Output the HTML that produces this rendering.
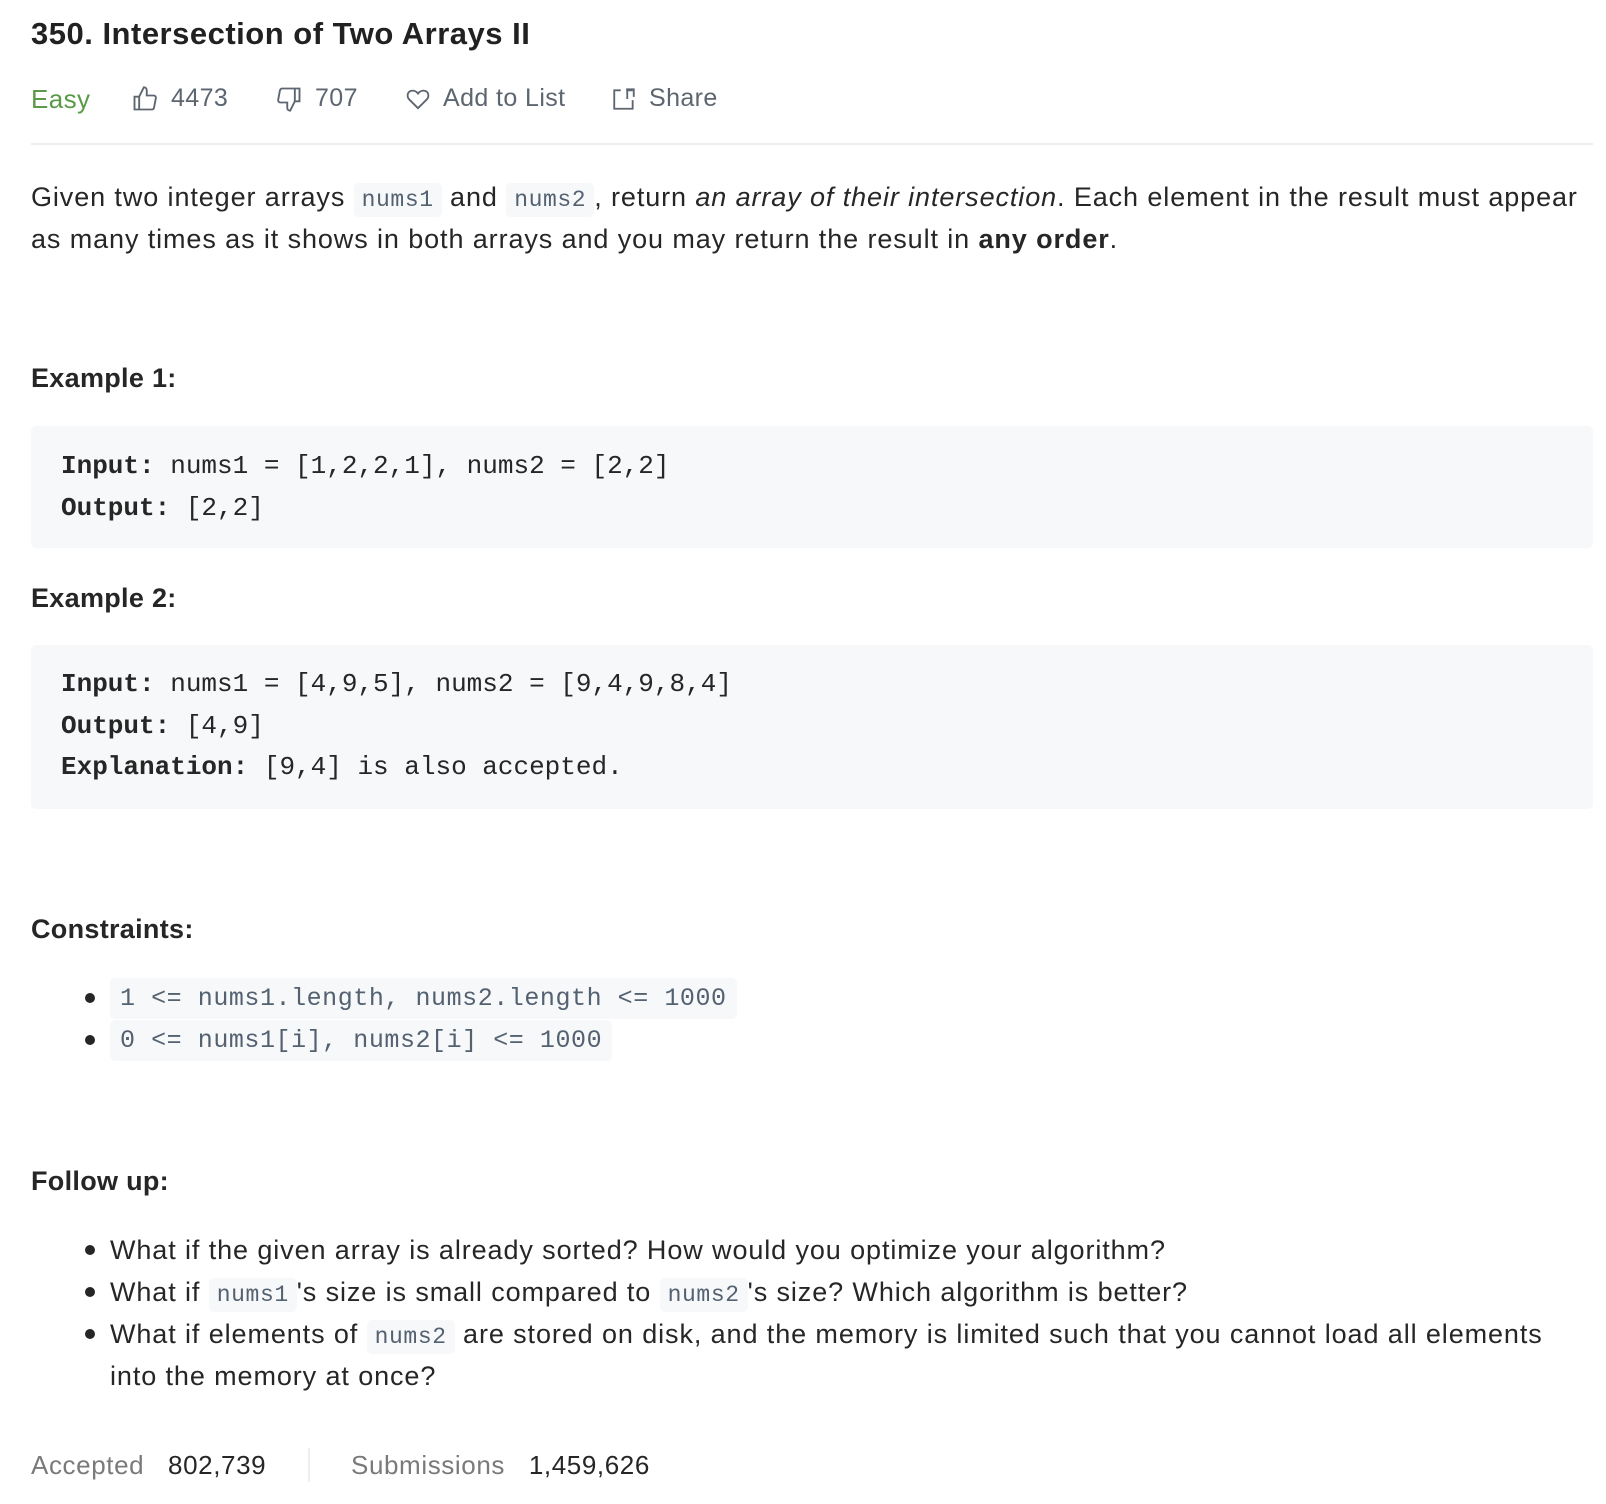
<!DOCTYPE html>
<html><head><meta charset="utf-8"><style>
body{margin:0;width:1606px;height:1504px;background:#fff;font-family:"Liberation Sans",sans-serif;color:#262626;position:relative;overflow:hidden}
.a{position:absolute;white-space:nowrap}
.t{font-size:31px;font-weight:600;color:#212121;left:31px;top:16px;letter-spacing:0.5px}
.meta{top:84px;font-size:25px;color:#5d6670;display:flex;align-items:center;letter-spacing:0.4px}
.p{font-size:27px;line-height:42px;left:31px;color:#262626;letter-spacing:0.9px}
code{font-family:"Liberation Mono",monospace;font-size:23px;background:#f7f8fa;color:#546171;padding:4px 8px;border-radius:5px;letter-spacing:0.6px}
.h{font-size:27px;font-weight:700;left:31px;color:#262626;letter-spacing:0.3px}
.pre{position:absolute;left:31px;width:1562px;background:#f7f8fa;border-radius:5px}
.pl{position:absolute;left:61px;font-family:"Liberation Mono",monospace;font-size:26px;color:#262626;white-space:pre}
.pl b{font-weight:700}
.dot{position:absolute;left:85px;width:10px;height:10px;border-radius:50%;background:#262626}
.c2{font-family:"Liberation Mono",monospace;font-size:25px;color:#546171;background:#f7f8fa;border-radius:5px;padding:6px 10px;letter-spacing:0.55px}
</style></head><body>
<div class="a t">350. Intersection of Two Arrays II</div>
<div class="a meta" style="left:31px;color:#5b9a48;font-size:26px">Easy</div>
<div class="a meta" style="left:131px">
<svg width="28" height="28" viewBox="0 0 24 24" fill="none" stroke="#5d6670" stroke-width="1.6"><path d="M7 10v11H3V10h4zm0 0l4-8c1.5 0 2.5 1 2.5 2.5V9h6c1 0 2 1 1.8 2.2l-1.5 8c-.2 1-1 1.8-2 1.8H7"/></svg><span style="margin-left:12px">4473</span></div>
<div class="a meta" style="left:275px">
<svg width="28" height="28" viewBox="0 0 24 24" fill="none" stroke="#5d6670" stroke-width="1.6"><path d="M17 14V3h4v11h-4zm0 0l-4 8c-1.5 0-2.5-1-2.5-2.5V15h-6c-1 0-2-1-1.8-2.2l1.5-8C4.4 3.8 5.2 3 6.2 3H17"/></svg><span style="margin-left:12px">707</span></div>
<div class="a meta" style="left:405px">
<svg width="26" height="26" viewBox="0 0 24 24" fill="none" stroke="#5d6670" stroke-width="1.7"><path d="M12 20.5L4 12.5C1.5 10 2 5.5 5.5 4.5 8 3.8 10.5 5 12 7c1.5-2 4-3.2 6.5-2.5 3.5 1 4 5.5 1.5 8z"/></svg><span style="margin-left:12px">Add to List</span></div>
<div class="a meta" style="left:611px">
<svg width="26" height="26" viewBox="0 0 24 24" fill="none" stroke="#5d6670" stroke-width="1.7"><path d="M9 4H3v17h17v-8M14 3h7v7M20 4l-6 0M14 3l7 0M15 12V4"/></svg><span style="margin-left:12px">Share</span></div>
<div class="a" style="left:31px;top:143px;width:1562px;height:2px;background:#eee"></div>
<div class="a p" style="top:176px">Given two integer arrays <code>nums1</code> and <code>nums2</code>, return <i>an array of their intersection</i>. Each element in the result must appear</div>
<div class="a p" style="top:218px">as many times as it shows in both arrays and you may return the result in <b>any order</b>.</div>
<div class="a h" style="top:363px">Example 1:</div>
<div class="pre" style="top:426px;height:122px"></div>
<div class="pl" style="top:451px"><b>Input:</b> nums1 = [1,2,2,1], nums2 = [2,2]</div>
<div class="pl" style="top:493px"><b>Output:</b> [2,2]</div>
<div class="a h" style="top:583px">Example 2:</div>
<div class="pre" style="top:645px;height:164px"></div>
<div class="pl" style="top:669px"><b>Input:</b> nums1 = [4,9,5], nums2 = [9,4,9,8,4]</div>
<div class="pl" style="top:711px"><b>Output:</b> [4,9]</div>
<div class="pl" style="top:752px"><b>Explanation:</b> [9,4] is also accepted.</div>
<div class="a h" style="top:914px">Constraints:</div>
<div class="dot" style="top:993px"></div>
<div class="a" style="left:110px;top:984px"><span class="c2">1 &lt;= nums1.length, nums2.length &lt;= 1000</span></div>
<div class="dot" style="top:1035px"></div>
<div class="a" style="left:110px;top:1026px"><span class="c2">0 &lt;= nums1[i], nums2[i] &lt;= 1000</span></div>
<div class="a h" style="top:1166px">Follow up:</div>
<div class="dot" style="top:1245px"></div>
<div class="a p" style="left:110px;top:1229px">What if the given array is already sorted? How would you optimize your algorithm?</div>
<div class="dot" style="top:1287px"></div>
<div class="a p" style="left:110px;top:1271px">What if <code>nums1</code>'s size is small compared to <code>nums2</code>'s size? Which algorithm is better?</div>
<div class="dot" style="top:1329px"></div>
<div class="a p" style="left:110px;top:1313px">What if elements of <code>nums2</code> are stored on disk, and the memory is limited such that you cannot load all elements</div>
<div class="a p" style="left:110px;top:1355px">into the memory at once?</div>
<div class="a" style="left:31px;top:1450px;font-size:26px;color:#7a7a7a;letter-spacing:0.6px">Accepted <span style="color:#262626;margin-left:16px">802,739</span></div>
<div class="a" style="left:308px;top:1448px;width:2px;height:34px;background:#eee"></div>
<div class="a" style="left:351px;top:1450px;font-size:26px;color:#7a7a7a;letter-spacing:0.6px">Submissions <span style="color:#262626;margin-left:16px">1,459,626</span></div>
</body></html>
